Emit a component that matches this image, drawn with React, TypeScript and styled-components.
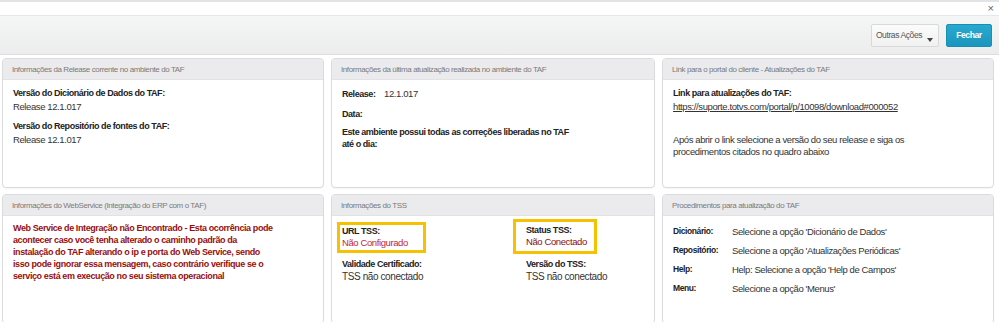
import * as React from 'react';
import styled, {createGlobalStyle} from 'styled-components';

const GlobalStyle = createGlobalStyle`
  html, body {
    margin: 0;
    padding: 0;
    background: #fff;
    overflow: hidden;
  }
  body {
    font-family: "Liberation Sans", Arial, sans-serif;
    font-size: 9.5px;
    letter-spacing: -0.4px;
    color: #333;
  }
`;

const Frame = styled.div`
  border-top: 2px solid #e2e3e4;
  width: 999px;
  height: 320px;
  overflow: hidden;
`;

const CloseBar = styled.div`
  height: 13px;
  display: flex;
  justify-content: flex-end;
  align-items: center;
  padding-right: 5px;
`;

const CloseButton = styled.span`
  font-size: 11px;
  line-height: 11px;
  letter-spacing: 0;
  color: #666;
`;

const Toolbar = styled.div`
  height: 38px;
  display: flex;
  justify-content: flex-end;
  align-items: center;
  gap: 7px;
  padding-right: 7px;
  background: linear-gradient(#f5f6f6, #ececed);
  border-top: 1px solid #e6e7e8;
  border-bottom: 1px solid #dcdddf;
`;

const ToolButton = styled.button<{$primary?: boolean; $w: number}>`
  position: relative;
  width: ${p => p.$w}px;
  height: 23px;
  padding: 0 ${p => (p.$primary ? '0' : '12px')} 0 0;
  font-family: inherit;
  font-size: 8.5px;
  letter-spacing: -0.4px;
  font-weight: ${p => (p.$primary ? 'bold' : 'normal')};
  color: ${p => (p.$primary ? '#fff' : '#555')};
  background: ${p => (p.$primary ? 'linear-gradient(#29a9d0, #1b96bd)' : 'linear-gradient(#fbfbfb, #f1f1f1)')};
  border: 1px solid ${p => (p.$primary ? '#1a8fb4' : '#d8d9da')};
  border-radius: 2px;
  cursor: pointer;
`;

const Caret = styled.span`
  position: absolute;
  right: 5px;
  bottom: 4px;
  width: 0;
  height: 0;
  border-left: 3px solid transparent;
  border-right: 3px solid transparent;
  border-top: 4px solid #444;
`;

const Grid = styled.div`
  display: grid;
  grid-template-columns: 322px 324px 332px;
  grid-auto-rows: 130px;
  column-gap: 7px;
  row-gap: 6px;
  padding: 3px 6px 0 2px;
`;

const Card = styled.section`
  border: 1px solid #dadbdc;
  border-radius: 4px;
  background: #fff;
  overflow: hidden;
  box-shadow: 0 1px 1px rgba(0, 0, 0, 0.04);
`;

const CardHeader = styled.header`
  height: 20px;
  display: flex;
  align-items: center;
  padding: 0 9px;
  background: #ebebee;
  border-bottom: 1px solid #e2e2e5;
  font-size: 8px;
  color: #7a7a7a;
`;

const CardBody = styled.div<{$pt?: number}>`
  padding: ${p => p.$pt ?? 7}px 10px 8px;
  line-height: 13px;
`;

const Label = styled.div`
  font-weight: bold;
  font-size: 9px;
  letter-spacing: -0.45px;
  color: #222;
`;

const Value = styled.div<{$gap?: number; $lh?: number}>`
  margin-bottom: ${p => p.$gap ?? 0}px;
  line-height: ${p => p.$lh ?? 13}px;
`;

const InlineRow = styled.div<{$gap?: number}>`
  display: flex;
  align-items: baseline;
  margin-bottom: ${p => p.$gap ?? 0}px;
  ${Label} {
    width: 42px;
  }
`;

const Statement = styled(Label)`
  line-height: 12px;
`;

const Link = styled.a`
  color: #333;
  text-decoration: underline;
`;

const Warning = styled.p`
  margin: 0;
  font-size: 9px;
  letter-spacing: -0.4px;
  line-height: 12px;
  font-weight: bold;
  color: #990e0e;
`;

const TssGrid = styled.div`
  display: grid;
  grid-template-columns: 176px 1fr;
  align-items: start;
  margin: -1px 0 0 -5px;
`;

const Highlight = styled.div<{$pad: string; $w: number; $shift?: number}>`
  width: ${p => p.$w}px;
  box-sizing: border-box;
  border: 3px solid #f6c200;
  padding: ${p => p.$pad};
  margin-top: ${p => p.$shift ?? 0}px;
  line-height: 12px;
  ${Label} {
    line-height: 11px;
  }
`;

const TssField = styled.div<{$indent: number}>`
  padding-left: ${p => p.$indent}px;
  margin-top: 4px;
  line-height: 14px;
  font-size: 10px;
  ${Label} {
    line-height: 12px;
  }
`;

const Error = styled.div<{$dark?: boolean}>`
  font-size: 9.5px;
  color: ${p => (p.$dark ? '#8e0d0d' : '#c0283a')};
`;

const StepList = styled.div`
  display: grid;
  grid-template-columns: 59px 1fr;
  row-gap: 6px;
  line-height: 13px;
  ${Label} {
    font-size: 8.5px;
    letter-spacing: -0.4px;
  }
`;

const steps = [
  ['Dicionário:', "Selecione a opção 'Dicionário de Dados'"],
  ['Repositório:', "Selecione a opção 'Atualizações Periódicas'"],
  ['Help:', "Help: Selecione a opção 'Help de Campos'"],
  ['Menu:', "Selecione a opção 'Menus'"],
];

const warningLines = [
  'Web Service de Integração não Encontrado - Esta ocorrência pode',
  'acontecer caso você tenha alterado o caminho padrão da',
  'instalação do TAF alterando o ip e porta do Web Service, sendo',
  'isso pode ignorar essa mensagem, caso contrário verifique se o',
  'serviço está em execução no seu sistema operacional',
];

const App: React.FC = () => {
  return (
    <Frame>
      <GlobalStyle/>
      <CloseBar>
        <CloseButton>×</CloseButton>
      </CloseBar>
      <Toolbar>
        <ToolButton $w={68}>
          Outras Ações
          <Caret/>
        </ToolButton>
        <ToolButton $primary $w={46}>Fechar</ToolButton>
      </Toolbar>
      <Grid>
        <Card>
          <CardHeader>Informações da Release corrente no ambiente do TAF</CardHeader>
          <CardBody>
            <Label>Versão do Dicionário de Dados do TAF:</Label>
            <Value $gap={7}>Release 12.1.017</Value>
            <Label>Versão do Repositório de fontes do TAF:</Label>
            <Value>Release 12.1.017</Value>
          </CardBody>
        </Card>
        <Card>
          <CardHeader>Informações da última atualização realizada no ambiente do TAF</CardHeader>
          <CardBody>
            <InlineRow $gap={7}>
              <Label>Release:</Label>
              <span>12.1.017</span>
            </InlineRow>
            <InlineRow $gap={5}>
              <Label>Data:</Label>
            </InlineRow>
            <Statement>
              Este ambiente possui todas as correções liberadas no TAF
              <br/>
              até o dia:
            </Statement>
          </CardBody>
        </Card>
        <Card>
          <CardHeader>Link para o portal do cliente - Atualizações do TAF</CardHeader>
          <CardBody>
            <Label>Link para atualizações do TAF:</Label>
            <Value $gap={21}>
              <Link href="#">https://suporte.totvs.com/portal/p/10098/download#000052</Link>
            </Value>
            <Value $lh={12}>
              Após abrir o link selecione a versão do seu release e siga os
              <br/>
              procedimentos citados no quadro abaixo
            </Value>
          </CardBody>
        </Card>
        <Card>
          <CardHeader>Informações do WebService (Integração do ERP com o TAF)</CardHeader>
          <CardBody $pt={6}>
            <Warning>
              {warningLines.map((line, i) => (
                <React.Fragment key={i}>
                  {line}
                  <br/>
                </React.Fragment>
              ))}
            </Warning>
          </CardBody>
        </Card>
        <Card>
          <CardHeader>Informações do TSS</CardHeader>
          <CardBody>
            <TssGrid>
              <Highlight $w={89} $pad="1px 1px 1px 2px">
                <Label>URL TSS:</Label>
                <Error>Não Configurado</Error>
              </Highlight>
              <Highlight $w={84} $pad="3px 1px 3px 10px" $shift={-3}>
                <Label>Status TSS:</Label>
                <Error $dark>Não Conectado</Error>
              </Highlight>
              <TssField $indent={5}>
                <Label>Validade Certificado:</Label>
                TSS não conectado
              </TssField>
              <TssField $indent={13}>
                <Label>Versão do TSS:</Label>
                TSS não conectado
              </TssField>
            </TssGrid>
          </CardBody>
        </Card>
        <Card>
          <CardHeader>Procedimentos para atualização do TAF</CardHeader>
          <CardBody $pt={9}>
            <StepList>
              {steps.map(([label, text]) => (
                <React.Fragment key={label}>
                  <Label>{label}</Label>
                  <span>{text}</span>
                </React.Fragment>
              ))}
            </StepList>
          </CardBody>
        </Card>
      </Grid>
    </Frame>
  );
};

export default App;
